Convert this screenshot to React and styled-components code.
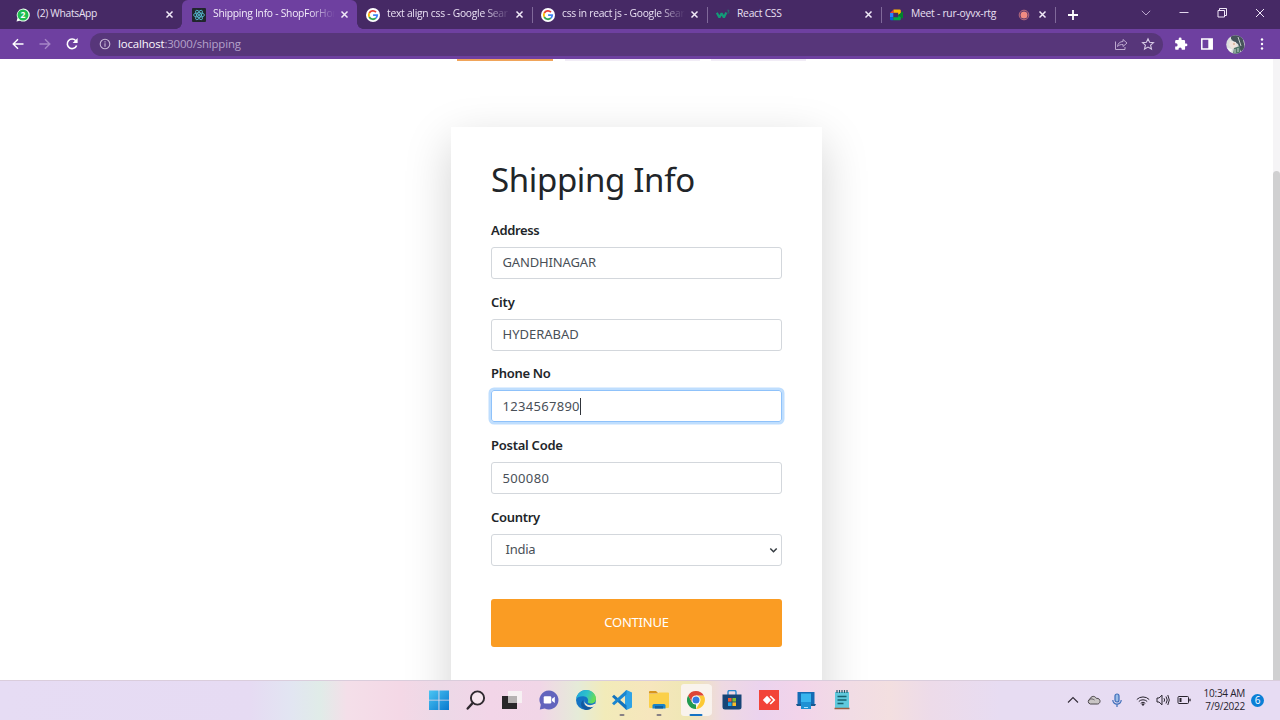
import React from "react";
import styled, { createGlobalStyle, css } from "styled-components";

const Global = createGlobalStyle`
  * { box-sizing: border-box; }
  body { margin: 0; overflow: hidden; background: #fff; }
  svg { display: block; flex: none; }
`;

const ui = `"Open Sans", "Noto Sans", sans-serif`;
const site = `"Noto Sans", "Open Sans", sans-serif`;

const Screen = styled.div`
  width: 1280px;
  height: 720px;
  display: flex;
  flex-direction: column;
  overflow: hidden;
`;

/* Browser frame */
const TabStrip = styled.header`
  height: 29px;
  flex: none;
  display: flex;
  background: #462965;
  font: 10.3px/29px ${ui};
  color: #e9e0f3;
`;
const Tab = styled.div`
  position: relative;
  width: ${(p) => p.$w || 175}px;
  flex: none;
  padding: 0 8px 0 ${(p) => p.$pad || 16}px;
  display: flex;
  align-items: center;
  ${(p) =>
    p.$active &&
    css`
      background: #6e40a0;
      border-radius: 6px 6px 0 0;
      color: #f3ecfa;
      &::before, &::after {
        content: "";
        position: absolute;
        bottom: 0;
        width: 6px;
        height: 6px;
      }
      &::before { left: -6px; background: radial-gradient(circle at 0 0, transparent 5.5px, #6e40a0 6px); }
      &::after { right: -6px; background: radial-gradient(circle at 100% 0, transparent 5.5px, #6e40a0 6px); }
    `}
`;
const Title = styled.span`
  flex: 1;
  margin: 0 5px 2px 7px;
  min-width: 0;
  white-space: nowrap;
  letter-spacing: ${(p) => p.$ls || 0}px;
  ${(p) => p.$fade && css`mask-image: linear-gradient(90deg, #000 calc(100% - 26px), transparent);`}
`;
const Divider = styled.i`
  align-self: center;
  flex: none;
  width: 1px;
  height: 16px;
  margin-right: -1px;
  background: #80699a;
`;
const NewTab = styled.div`
  width: 70px;
  padding-left: 12px;
  display: flex;
  align-items: center;
`;
const WindowButtons = styled.div`
  margin-left: auto;
  margin-right: 1px;
  display: flex;
`;
const WindowButton = styled.div`
  width: 38px;
  height: 26px;
  display: flex;
  align-items: center;
  justify-content: center;
`;
const Toolbar = styled.div`
  height: 30px;
  flex: none;
  padding: 0 13px 0 11px;
  display: flex;
  align-items: center;
  background: #6e40a0;
  color: #fff;
`;
const NavIcons = styled.div`
  display: flex;
  gap: 13px;
  width: 79px;
`;
const Omnibox = styled.div`
  width: 1073px;
  height: 23px;
  padding: 0 8px;
  display: flex;
  align-items: center;
  border-radius: 12px;
  background: #57367a;
`;
const Url = styled.div`
  flex: 1;
  margin: 0 0 1px 6px;
  font: 11.4px/22px ${ui};
  letter-spacing: -0.15px;
  color: #b5a2ca;
  span { color: #fbf8fe; }
`;
const OmniActions = styled.div`
  display: flex;
  gap: 13px;
`;
const ToolIcons = styled.div`
  margin-left: auto;
  display: flex;
  align-items: center;
  gap: 12px;
`;

/* Page */
const Page = styled.main`
  position: relative;
  height: 621px;
  flex: none;
  overflow: hidden;
  padding-right: 7px;
  display: flex;
  flex-direction: column;
  align-items: center;
  font-family: ${site};
`;
const ScrollTrack = styled.div`
  position: absolute;
  top: 0;
  right: 0;
  width: 7px;
  height: 100%;
  padding-top: 112px;
  background: #f5f4f6;
`;
const ScrollThumb = styled.div`
  height: 520px;
  border-radius: 4px 4px 0 0;
  background: #d0d0d1;
`;
const Steps = styled.div`
  width: 359px;
  height: 2px;
  flex: none;
  display: flex;
  justify-content: space-between;
  margin-bottom: 66px;
  align-self: flex-start;
  margin-left: 452px;
  padding: 0 5px;
`;
const Step = styled.div`
  width: ${(p) => p.$w}px;
  background: ${(p) => (p.$on ? "#f0a45a" : "#f1ecf6")};
`;
const Card = styled.form`
  width: 371px;
  height: 620px;
  flex: none;
  padding: 32px 40px 0;
  background: #fff;
  box-shadow: 0 15px 44px rgba(0, 0, 0, 0.18);
  color: #212529;
`;
const Heading = styled.h1`
  margin: 0 0 15.9px;
  font-size: 33px;
  line-height: 42px;
  font-weight: 400;
  letter-spacing: -0.35px;
  white-space: nowrap;
`;
const Field = styled.div`
  height: 71.75px;
`;
const Label = styled.label`
  display: block;
  height: 25px;
  padding-top: 1px;
  font-size: 13px;
  line-height: 24px;
  font-weight: 600;
  letter-spacing: ${(p) => p.$ls}px;
  margin-bottom: 5px;
`;
const Control = styled.div`
  height: 32px;
  display: flex;
  align-items: center;
  padding: 0 ${(p) => (p.$select ? 3 : 10)}px ${(p) => (p.$focus ? 0 : 1)}px ${(p) => (p.$select ? 13.5 : 10.5)}px;
  border: 1px solid #d3d7dc;
  border-radius: 3px;
  font-size: 13px;
  line-height: 28px;
  color: #495057;
  ${(p) =>
    p.$focus &&
    css`
      border-color: #8fc2fa;
      box-shadow: 0 0 0 2.5px #bfdefe;
    `}
`;
const Value = styled.span`
  letter-spacing: ${(p) => p.$ls}px;
  margin-right: ${(p) => (p.$grow ? "auto" : 0)};
`;
const Caret = styled.i`
  width: 1px;
  height: 17px;
  background: #30343a;
`;
const Continue = styled.button`
  display: flex;
  align-items: center;
  justify-content: center;
  width: 291px;
  height: 48px;
  margin-top: 23px;
  padding: 0 0 2px;
  border: 0;
  border-radius: 3px;
  background: #fa9c23;
  color: #fff;
  font: 13px/20px ${site};
  letter-spacing: -0.2px;
`;

/* Taskbar */
const Taskbar = styled.footer`
  height: 40px;
  flex: none;
  display: flex;
  padding-left: 420.5px;
  border-top: 1px solid #dacddc;
  background: linear-gradient(90deg, #e6dcf4 0, #e6dbf3 250px, #e2e5f2 290px, #e0ece8 320px, #f4dfe9 347px, #f4d8e6 400px, #ecd9e7 440px, #f2d5e8 490px, #f1d6e7 540px, #e5ebd8 578px, #f2ebb9 605px, #f6e6bd 650px, #efe7b5 688px, #eed9e2 722px, #ebd3ee 760px, #f2d4ea 800px, #f1dce5 850px, #f3dfe0 890px, #eddbe9 930px, #e7dcf2 1000px, #e7dcf3 1280px);
`;
const TaskItem = styled.div`
  position: relative;
  width: 36.7px;
  height: 38px;
  display: flex;
  align-items: center;
  justify-content: center;
`;
const Plate = styled.div`
  width: 30px;
  height: 32px;
  display: flex;
  align-items: center;
  justify-content: center;
  border-radius: 3px;
  ${(p) => p.$on && css`background: #f9f3ed; box-shadow: 2px 0 0 -1px #fff9;`}
`;
const Running = styled.i`
  position: absolute;
  bottom: 3px;
  left: 50%;
  width: ${(p) => (p.$on ? 13 : 5)}px;
  height: 2.5px;
  border-radius: 2px;
  transform: translateX(-50%);
  background: ${(p) => (p.$on ? "#1572c4" : "#888085")};
`;
const Tray = styled.div`
  height: 38px;
  margin-left: auto;
  display: flex;
  align-items: center;
  padding-right: 16px;
`;
const TrayIcon = styled.div`
  display: flex;
  justify-content: center;
  width: ${(p) => p.$w}px;
`;
const Clock = styled.div`
  width: 42px;
  margin-left: 5px;
  display: flex;
  flex-direction: column;
  align-items: flex-end;
  font: 10px/13px ${ui};
  letter-spacing: -0.25px;
  white-space: nowrap;
  color: #26222c;
`;
const Count = styled.div`
  width: 13px;
  height: 13px;
  margin-left: 6px;
  border-radius: 50%;
  background: #0b7fd6;
  color: #fff;
  font: 10px/13px ${ui};
  text-align: center;
`;

const Close = () => (
  <svg width="9" height="9" viewBox="0 0 9 9" stroke="#f1eaf8" strokeWidth="1.5"><path d="M1.500 1.500l6 6M7.500 1.500l-6 6" /></svg>
);
const WhatsApp = () => (
  <svg width="14" height="14" viewBox="0 0 14 14">
    <path d="M.5 13.5l1-3.4A6.5 6.5 0 1 1 4 12.7z" fill="#f3fff5" />
    <circle cx="7" cy="7" r="5.5" fill="#1fbd50" />
    <text x="7" y="10" fontSize="8.5" fontWeight="700" textAnchor="middle" fill="#fff" fontFamily="Open Sans">2</text>
  </svg>
);
const ReactLogo = () => (
  <svg width="14" height="14" viewBox="0 0 14 14">
    <rect width="14" height="14" rx="1" fill="#20262c" />
    <g fill="none" stroke="#5ac4dc" strokeWidth=".8">
      <ellipse cx="7" cy="7" rx="5.4" ry="2.1" />
      <ellipse cx="7" cy="7" rx="5.4" ry="2.1" transform="rotate(60 7 7)" />
      <ellipse cx="7" cy="7" rx="5.4" ry="2.1" transform="rotate(120 7 7)" />
    </g>
    <circle cx="7" cy="7" r="1" fill="#5ac4dc" />
  </svg>
);
const Google = () => (
  <svg width="14" height="14" viewBox="0 0 14 14">
    <circle cx="7" cy="7" r="7" fill="#fff" />
    <g fill="none" strokeWidth="1.8">
      <path d="M3.3 5A4.2 4.2 0 0 1 10 4.1" stroke="#e94235" />
      <path d="M3.3 5a4.2 4.2 0 0 0 0 4" stroke="#fabb05" />
      <path d="M3.3 9a4.2 4.2 0 0 0 6.5 1.2" stroke="#34a853" />
      <path d="M9.8 10.2A4.2 4.2 0 0 0 11.2 7.2H7.1" stroke="#4285f4" />
    </g>
  </svg>
);
const W3 = () => (
  <svg width="14" height="14" viewBox="0 0 14 14" fill="none" stroke="#139b78">
    <path d="M.8 4.800l2.600 4.600 2.200-4.200 2.300 4.200 2.400-4.800" strokeWidth="2.200" strokeLinejoin="bevel" />
    <path d="M11.300 2.200h1.800l-1 1.200c1.700.1 1.300 2-.7 1.500" strokeWidth=".7" opacity=".8" />
  </svg>
);
const Meet = () => (
  <svg width="14" height="14" viewBox="0 0 14 14">
    <path d="M0 5l3.600-3.600V5z" fill="#e94235" />
    <path d="M0 5h3.300v4.300H0z" fill="#2684fc" />
    <path d="M0 9.300h3.300v3H1Q0 12.300 0 11.300z" fill="#0066da" />
    <path d="M3.600 1.400h6q1.200 0 1.200 1.200v2.800L8.200 7V4.800H3.600z" fill="#ffba00" />
    <path d="M3.300 9.300h4.900V7l2.600 2.200v2q0 1.100-1.100 1.100H3.300z" fill="#00ac47" />
    <path d="M8.200 7l4-3.300q.8-.5.8.4v6q0 .8-.8.300z" fill="#00832d" />
  </svg>
);

const tabs = [
  { icon: <WhatsApp />, title: "(2) WhatsApp", w: 182, ls: -0.32 },
  { icon: <ReactLogo />, title: "Shipping Info - ShopForHor", pad: 10, active: true, fade: true, ls: -0.26 },
  { icon: <Google />, title: "text align css - Google Sear", fade: true, pad: 9, ls: -0.26 },
  { icon: <Google />, title: "css in react js - Google Sear", fade: true, pad: 9, ls: -0.26, line: true },
  { icon: <W3 />, title: "React CSS", w: 174, pad: 9, ls: -0.25, line: true },
  { icon: <Meet />, title: "Meet - rur-oyvx-rtg", w: 174, pad: 9, ls: -0.25, rec: true, line: true },
];

const taskApps = [
  <svg width="20" height="20" viewBox="0 0 20 20">
    <defs><linearGradient id="win" x2="1" y2="1"><stop stopColor="#4bc5f3" /><stop offset="1" stopColor="#0878ce" /></linearGradient></defs>
    <path d="M0 .5h9.5v9.2H0zM10.4.5H20v9.2h-9.6zM0 10.5h9.5V20H0zM10.4 10.5H20V20h-9.600z" fill="url(#win)" />
  </svg>,
  <svg width="20" height="20" viewBox="0 0 20 20" fill="none" stroke="#302a30">
    <circle cx="11.5" cy="8" r="6.6" strokeWidth="1.900" fill="#f7e6ef" /><path d="M6.800 12.900L1.700 18.500" strokeWidth="2.400" strokeLinecap="round" />
  </svg>,
  <svg width="20" height="20" viewBox="0 0 20 20">
    <path d="M0 6h15v13H0z" fill="#292729" /><path d="M6 1h14v12H6z" fill="#f8f6f5" opacity=".86" /><path d="M6 6h9v7H6z" fill="#b6b2b2" />
  </svg>,
  <svg width="20" height="20" viewBox="0 0 20 20">
    <path d="M10 .5a9.500 9.500 0 1 1-4.300 18L.8 19.400l1-4.600A9.500 9.500 0 0 1 10 .5z" fill="#6264bd" />
    <rect x="4.700" y="6.300" width="7.600" height="7.200" rx="1.200" fill="#fff" /><path d="M13 8.800l2.800-2v6.300l-2.800-2z" fill="#fff" />
  </svg>,
  <svg width="20" height="20" viewBox="0 0 20 20">
    <defs>
      <linearGradient id="ed" x1="0" y1="0" x2="1" y2=".3"><stop stopColor="#1ba5df" /><stop offset=".6" stopColor="#2fc2c8" /><stop offset="1" stopColor="#66dc58" /></linearGradient>
    </defs>
    <circle cx="10" cy="10" r="10" fill="#1474c4" />
    <path d="M0 9.500C.6 4 5 0 10 0c6 0 10 4.300 10 8.700 0 3-2.200 4.800-5 4.800-2.300 0-3.400-.8-3.200-1.700.9-1.800.1-4.700-3.300-5.300C5 5.900 1.300 7 0 9.500z" fill="url(#ed)" />
    <path d="M7.500 9.800c-1.500 5 3.300 8.700 9.800 6.800-2 2.500-4.500 3.400-7.300 3.400-5.500-1.500-6.500-7.400-2.500-10.200z" fill="#1458a0" />
    <path d="M8.900 9.600c-.8 1.400-.3 4 2.600 5.100 2.500 1 5.100.3 7.200-.9l1 .3-1.700 2.300c-4 2-11.600.3-9.100-6.800z" fill="#f4e8d8" />
  </svg>,
  <svg width="20" height="20" viewBox="0 0 20 20">
    <path d="M14.500 0L20 2.500v15L14.500 20 13 18.500V1.500z" fill="#2fa3e6" />
    <path d="M2 4.800L14.500 15.500v4.500L0 6.800z" fill="#1273bd" />
    <path d="M2 15.200L14.500 4.500V0L0 13.200z" fill="#1a86d0" />
  </svg>,
  <svg width="20" height="20" viewBox="0 0 20 20">
    <path d="M0 2q0-1 1-1h6l2.500 2.500H0z" fill="#d8951c" /><path d="M0 4h8l2-1.500h9q1 0 1 1V17q0 1-1 1H1q-1 0-1-1z" fill="#fbd04a" />
    <path d="M3.500 18.500v-3q0-1.500 1.500-1.500h10q1.500 0 1.500 1.500v3z" fill="#1784cb" /><path d="M6 16h8v2.500H6z" fill="#125f9d" />
  </svg>,
  <svg width="18" height="18" viewBox="0 0 18 18">
    <path d="M9 9v9A9 9 0 0 1 1.200 4.500L5.100 11.200z" fill="#229b50" />
    <path d="M9 4.600h7.800A9 9 0 0 1 9 18l3.900-6.800z" fill="#fcc934" />
    <path d="M1.200 4.500L5.100 11.200 9 9V4.600h7.800A9 9 0 0 0 1.200 4.500z" fill="#de4537" />
    <circle cx="9" cy="9" r="4.500" fill="#fff" /><circle cx="9" cy="9" r="3.500" fill="#347be0" />
  </svg>,
  <svg width="20" height="20" viewBox="0 0 20 20">
    <path d="M6 5V2q0-1.500 1.500-1.500h5Q14 .5 14 2v3" fill="none" stroke="#288ad0" strokeWidth="1.400" /><path d="M.5 4.500h19V17q0 2.500-2.500 2.500H3Q.5 19.500.5 17z" fill="#174577" />
    <path d="M6 8h3.600v3.600H6z" fill="#f25a31" /><path d="M10.400 8H14v3.600h-3.600z" fill="#82bd2d" /><path d="M6 12.400h3.600V16H6z" fill="#22a5e9" /><path d="M10.400 12.400H14V16h-3.600z" fill="#fbbd28" />
  </svg>,
  <svg width="20" height="20" viewBox="0 0 20 20">
    <path d="M0 0h20v20H0z" fill="#f24438" /><path d="M8 5.800l4.200 4.200L8 14.200 3.800 10z" fill="#fff" /><path d="M11.200 6l4 4-4 4" fill="none" stroke="#fff" strokeWidth="1.700" />
  </svg>,
  <svg width="20" height="20" viewBox="0 0 20 20">
    <path d="M1.500 2h17v12h-17z" fill="#146cb5" /><path d="M0 14h20l-1 2H1z" fill="#1a578e" /><path d="M5 3.500h10V19H5z" fill="#38b5ee" /><path d="M5 12h10v7H5z" fill="#1e91d4" /><path d="M8 17.500h4" stroke="#a9e3ff" />
  </svg>,
  <svg width="18" height="20" viewBox="0 0 18 20">
    <path d="M2 2h14v16H2z" fill="#5fc9dd" /><path d="M1.500 18.500h15" stroke="#9e5d3f" strokeWidth="1.500" />
    <path d="M4 0v3M6.500 0v3M9 0v3M11.500 0v3M14 0v3" stroke="#23596b" strokeWidth="1.200" /><path d="M4.500 6.500h9M4.500 10h9M4.500 13.500h6" stroke="#17616f" strokeWidth="1.300" />
  </svg>,
];

const fields = [
  { label: "Address", value: "GANDHINAGAR", ls: -0.35, vls: -0.15 },
  { label: "City", value: "HYDERABAD", ls: -0.2, vls: 0 },
  { label: "Phone No", value: "1234567890", ls: -0.3, vls: 0.3, focus: true },
  { label: "Postal Code", value: "500080", ls: -0.25, vls: 0.35 },
  { label: "Country", value: "India", ls: -0.3, vls: -0.25, select: true },
];

export default function App() {
  return (
    <Screen>
      <Global />
      <TabStrip>
        {tabs.map((t, i) => (
          <React.Fragment key={i}>
            {t.line && <Divider />}
            <Tab $w={t.w} $pad={t.pad} $active={t.active}>
              {t.icon}
              <Title $ls={t.ls} $fade={t.fade}>{t.title}</Title>
              {t.rec && (
                <svg width="20" height="12" viewBox="0 0 20 12"><circle cx="6" cy="6" r="4.800" fill="none" stroke="#d67c84" strokeWidth=".8" /><circle cx="6" cy="6" r="3.500" fill="#f18b82" /></svg>
              )}
              <Close />
            </Tab>
          </React.Fragment>
        ))}
        <Divider />
        <NewTab>
          <svg width="12" height="12" viewBox="0 0 12 12" stroke="#fff" strokeWidth="1.800"><path d="M6 1v10M1 6h10" /></svg>
        </NewTab>
        <WindowButtons>
          <WindowButton><svg width="10" height="10" viewBox="0 0 10 10" fill="none" stroke="#b9a5cb"><path d="M.8 2.800L5 7l4.200-4.200" /></svg></WindowButton>
          <WindowButton><svg width="10" height="10" viewBox="0 0 10 10" stroke="#e2d7ed"><path d="M.5 4.500h9" /></svg></WindowButton>
          <WindowButton><svg width="10" height="10" viewBox="0 0 10 10" fill="none" stroke="#f0e7f8"><path d="M1 2.500h6.500V9H1zM2.500 2.500v-2h7v7h-2" /></svg></WindowButton>
          <WindowButton><svg width="10" height="10" viewBox="0 0 10 10" stroke="#f0e7f8"><path d="M1 1l8 8M9 1L1 9" /></svg></WindowButton>
        </WindowButtons>
      </TabStrip>
      <Toolbar>
        <NavIcons>
          <svg width="14" height="14" viewBox="0 0 14 14" fill="none" stroke="#fff" strokeWidth="1.400"><path d="M12.500 7H2.500M7 2.200L2.200 7 7 11.800" /></svg>
          <svg width="14" height="14" viewBox="0 0 14 14" fill="none" stroke="#a685c7" strokeWidth="1.400"><path d="M1.500 7h10M7 2.200L11.800 7 7 11.800" /></svg>
          <svg width="14" height="14" viewBox="0 0 14 14" fill="none" stroke="#fff" strokeWidth="1.600"><path d="M11.600 8.500a4.800 4.800 0 1 1-.8-4.700" /><path d="M12.600 1v5H7.600z" fill="#fff" stroke="none" /></svg>
        </NavIcons>
        <Omnibox>
          <svg width="14" height="14" viewBox="0 0 14 14" fill="none" stroke="#c8b8d7" strokeWidth="1.100"><circle cx="7" cy="7" r="4.800" /><path d="M7 6.300v3.400M7 4.200v1.200" /></svg>
          <Url><span>localhost</span>:3000/shipping</Url>
          <OmniActions>
            <svg width="14" height="14" viewBox="0 0 14 14" fill="none" stroke="#bda9cf"><path d="M1.500 4.500v8h9.500V10" /><path d="M3.500 9.500C4 6 6 4.700 9 4.500v-2L13 6 9 9.500v-2C6.500 7.400 5 8 3.500 9.500z" /></svg>
            <svg width="14" height="14" viewBox="0 0 14 14" fill="none" stroke="#d8cae6" strokeWidth="1.100"><path d="M7 1.700l1.600 3.500 3.900.4-2.900 2.600.9 3.900L7 10.100l-3.500 2 .9-3.900L1.500 5.600l3.900-.4z" /></svg>
          </OmniActions>
        </Omnibox>
        <ToolIcons>
          <svg width="14" height="14" viewBox="0 0 24 24" fill="#fff"><path d="M20.500 11H19V7a2 2 0 0 0-2-2h-4V3.500a2.500 2.500 0 0 0-5 0V5H4a2 2 0 0 0-2 2v3.800h1.500a2.700 2.700 0 0 1 0 5.400H2V20a2 2 0 0 0 2 2h3.800v-1.500a2.700 2.700 0 0 1 5.400 0V22H17a2 2 0 0 0 2-2v-4h1.500a2.500 2.500 0 0 0 0-5z" /></svg>
          <svg width="14" height="14" viewBox="0 0 14 14"><path d="M1.800 2h10.400v10H1.800z" fill="none" stroke="#fff" strokeWidth="1.500" /><path d="M8.300 2h4v10h-4z" fill="#fff" /></svg>
          <svg width="19" height="19" viewBox="0 0 19 19">
            <defs><clipPath id="av"><circle cx="9.500" cy="9.500" r="9.300" /></clipPath></defs>
            <g clipPath="url(#av)"><path d="M0 0h19v19H0z" fill="#d9dedc" /><path d="M5 0h11l3 13-4 4-3-8-7-4z" fill="#46545b" /><path d="M4 6l6 1 1 5-5 2-3-4z" fill="#f0e3dc" /><path d="M7 9h2" stroke="#d19a76" /><path d="M8 13l6-2v8H7z" fill="#517668" /><path d="M12 2l3 9M4 3l3 4M9 14v4M12 13v4" stroke="#e6ece9" strokeWidth=".8" /><path d="M1 13l5 1-1 4z" fill="#f6f6f5" /></g>
          </svg>
          <svg width="10" height="14" viewBox="0 0 10 14" fill="#fff"><circle cx="5" cy="2.500" r="1.200" /><circle cx="5" cy="7" r="1.200" /><circle cx="5" cy="11.500" r="1.200" /></svg>
        </ToolIcons>
      </Toolbar>
      <Page>
        <Steps><Step $w={96} $on /><Step $w={135} /><Step $w={95} /></Steps>
        <Card>
          <Heading>Shipping Info</Heading>
          {fields.map((f) => (
            <Field key={f.label}>
              <Label $ls={f.ls}>{f.label}</Label>
              <Control $focus={f.focus} $select={f.select}>
                <Value $ls={f.vls} $grow={f.select}>{f.value}</Value>
                {f.focus && <Caret />}
                {f.select && <svg width="9" height="9" viewBox="0 0 9 9" fill="none" stroke="#343a40" strokeWidth="1.500"><path d="M1.300 3.500l3.200 3.200 3.200-3.200" /></svg>}
              </Control>
            </Field>
          ))}
          <Continue type="button">CONTINUE</Continue>
        </Card>
        <ScrollTrack><ScrollThumb /></ScrollTrack>
      </Page>
      <Taskbar>
        {taskApps.map((icon, i) => (
          <TaskItem key={i}>
            <Plate $on={i === 7}>{icon}</Plate>
            {(i === 5 || i === 6 || i === 7) && <Running $on={i === 7} />}
          </TaskItem>
        ))}
        <Tray>
          <TrayIcon $w={20}><svg width="12" height="8" viewBox="0 0 12 8" fill="none" stroke="#332c38" strokeWidth="1.100"><path d="M1 6.500l5-5 5 5" /></svg></TrayIcon>
          <TrayIcon $w={21}><svg width="14" height="10" viewBox="0 0 14 10"><path d="M3.300 9a2.600 2.600 0 0 1-.3-5C4 1 7.500.3 9.300 3.300 12 3 13.300 5 13 6.600 12.700 8.300 11.500 9 10.500 9z" fill="#c9c5c5" stroke="#4b464b" /><path d="M1.500 6C3 3.300 5 3.500 7.500 5" fill="none" stroke="#5b555b" /></svg></TrayIcon>
          <TrayIcon $w={25}><svg width="12" height="15" viewBox="0 0 12 15" fill="none" stroke="#3d6db9" strokeWidth="1.200"><rect x="4" y="1" width="4" height="8" rx="2" fill="#9bbce6" /><path d="M1.800 7a4.200 4.200 0 0 0 8.400 0M6 11.200V14" /></svg></TrayIcon>
          <TrayIcon $w={27}><svg width="14" height="11" viewBox="0 0 14 11" fill="none" stroke="#29242e"><path d="M.8 4.500a8.800 8.800 0 0 1 12.400 0M2.800 6.500a6 6 0 0 1 8.400 0M4.700 8.300a3.300 3.300 0 0 1 4.600 0" /><circle cx="7" cy="9.500" r=".8" fill="#29242e" /></svg></TrayIcon>
          <TrayIcon $w={14}><svg width="14" height="12" viewBox="0 0 14 12" fill="none" stroke="#29242e"><path d="M1 4h2l3-2.800v9.600L3 8H1zM8 4.200q1.200 1.800 0 3.600M10 2.500q2.500 3.500 0 7M11.800 1q3 5 0 10" /></svg></TrayIcon>
          <TrayIcon $w={28}><svg width="14" height="10" viewBox="0 0 14 10" fill="none" stroke="#29242e"><rect x="1" y="1.500" width="10.500" height="7" rx="1" /><path d="M13 3.800v2.400" strokeWidth="1.300" /><path d="M2.500 3h2v4h-2z" fill="#29242e" stroke="none" /></svg></TrayIcon>
          <Clock><span>10:34 AM</span><span>7/9/2022</span></Clock>
          <Count>6</Count>
        </Tray>
      </Taskbar>
    </Screen>
  );
}
